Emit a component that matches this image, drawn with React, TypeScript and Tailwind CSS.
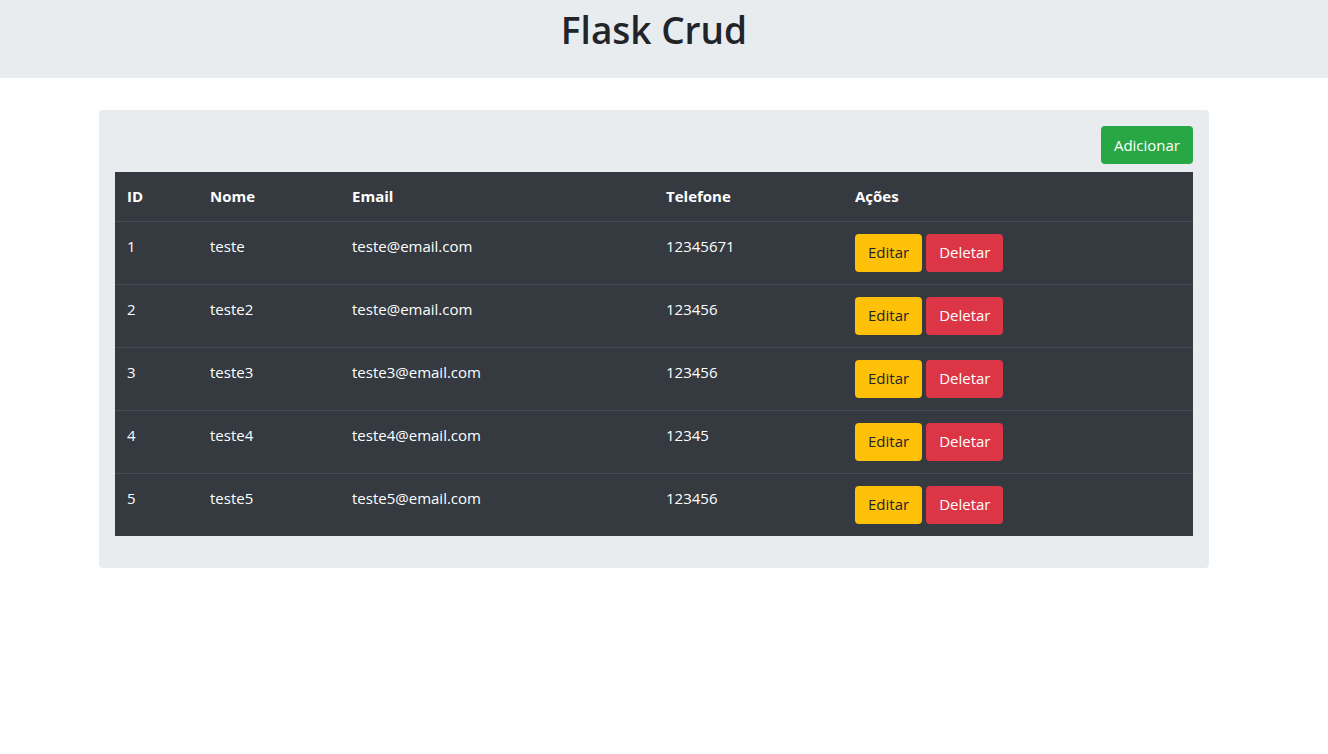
const users = [
  { id: 1, nome: 'teste', email: 'teste@email.com', telefone: '12345671' },
  { id: 2, nome: 'teste2', email: 'teste@email.com', telefone: '123456' },
  { id: 3, nome: 'teste3', email: 'teste3@email.com', telefone: '123456' },
  { id: 4, nome: 'teste4', email: 'teste4@email.com', telefone: '12345' },
  { id: 5, nome: 'teste5', email: 'teste5@email.com', telefone: '123456' },
]

export default function App() {
  return (
    <div className="min-h-screen bg-white font-['Open_Sans',sans-serif] text-[#212529]">
      <header className="flex h-[78px] justify-center bg-[#e9ecef] pr-5 pt-[6px]">
        <h1 className="text-[37px] font-semibold leading-[48px]">Flask Crud</h1>
      </header>

      <main className="ml-[99px] mt-8 w-[1110px] rounded bg-[#e9ecef] p-4">
        <div className="mb-2 flex justify-end">
          <button className="h-[38px] rounded bg-[#28a745] px-[13px] text-[15px] text-white">
            Adicionar
          </button>
        </div>

        <table className="mb-4 w-full table-fixed border-collapse bg-[#343a40] text-[15px] text-white">
          <colgroup>
            <col className="w-[83px]" />
            <col className="w-[142px]" />
            <col className="w-[314px]" />
            <col className="w-[189px]" />
            <col />
          </colgroup>
          <thead>
            <tr className="h-[49px] border-b border-[#454d55] text-left">
              <th className="px-3 font-bold">ID</th>
              <th className="px-3 font-bold">Nome</th>
              <th className="px-3 font-bold">Email</th>
              <th className="px-3 font-bold">Telefone</th>
              <th className="px-3 font-bold">Ações</th>
            </tr>
          </thead>
          <tbody>
            {users.map((u, i) => (
              <tr key={u.id} className={i > 0 ? 'border-t border-[#454d55]' : ''}>
                <td className="p-3 align-top leading-6">{u.id}</td>
                <td className="p-3 align-top leading-6">{u.nome}</td>
                <td className="p-3 align-top leading-6">{u.email}</td>
                <td className="p-3 align-top leading-6">{u.telefone}</td>
                <td className="p-3 align-top">
                  <div className="flex gap-1">
                    <button className="h-[38px] rounded bg-[#ffc107] px-[13px] text-[15px] text-[#212529]">
                      Editar
                    </button>
                    <button className="h-[38px] rounded bg-[#dc3545] px-[13px] text-[15px] text-white">
                      Deletar
                    </button>
                  </div>
                </td>
              </tr>
            ))}
          </tbody>
        </table>
      </main>
    </div>
  )
}
